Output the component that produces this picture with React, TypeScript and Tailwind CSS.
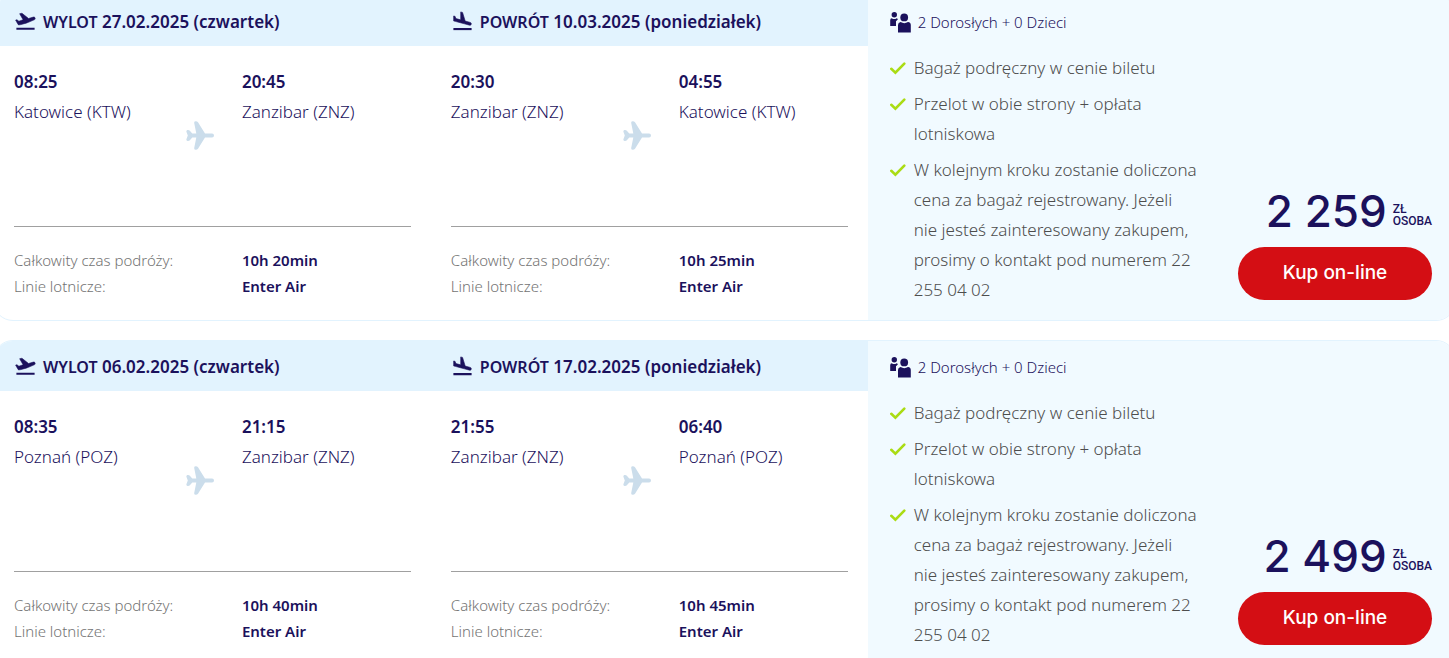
type Stop = { time: string; place: string };
type Flight = {
  kind: "out" | "back";
  label: string;
  date: string;
  from: Stop;
  to: Stop;
  duration: string;
  airline: string;
};
type Offer = { price: string; flights: Flight[] };

const offers: Offer[] = [
  {
    price: "2 259",
    flights: [
      {
        kind: "out",
        label: "WYLOT",
        date: "27.02.2025 (czwartek)",
        from: { time: "08:25", place: "Katowice (KTW)" },
        to: { time: "20:45", place: "Zanzibar (ZNZ)" },
        duration: "10h 20min",
        airline: "Enter Air",
      },
      {
        kind: "back",
        label: "POWRÓT",
        date: "10.03.2025 (poniedziałek)",
        from: { time: "20:30", place: "Zanzibar (ZNZ)" },
        to: { time: "04:55", place: "Katowice (KTW)" },
        duration: "10h 25min",
        airline: "Enter Air",
      },
    ],
  },
  {
    price: "2 499",
    flights: [
      {
        kind: "out",
        label: "WYLOT",
        date: "06.02.2025 (czwartek)",
        from: { time: "08:35", place: "Poznań (POZ)" },
        to: { time: "21:15", place: "Zanzibar (ZNZ)" },
        duration: "10h 40min",
        airline: "Enter Air",
      },
      {
        kind: "back",
        label: "POWRÓT",
        date: "17.02.2025 (poniedziałek)",
        from: { time: "21:55", place: "Zanzibar (ZNZ)" },
        to: { time: "06:40", place: "Poznań (POZ)" },
        duration: "10h 45min",
        airline: "Enter Air",
      },
    ],
  },
];

const benefits = [
  "Bagaż podręczny w cenie biletu",
  "Przelot w obie strony + opłata lotniskowa",
  "W kolejnym kroku zostanie doliczona cena za bagaż rejestrowany. Jeżeli nie jesteś zainteresowany zakupem, prosimy o kontakt pod numerem 22 255 04 02",
];

function TakeoffIcon() {
  return (
    <svg viewBox="0 0 24 24" className="size-[23px] shrink-0 fill-current" aria-hidden="true">
      <path d="M2.5 18.4h19v2.2h-19z" />
      <path
        d="M22.07 8.44c-.21-.8-1.04-1.28-1.84-1.06L15.2 8.9l-6.9-5.5-2.4.5 3.6 6.3-4.4 1.5-1.97-1.54-1.45.39 1.82 3.16 1.2 1.9 2.6-.4 5.4-1.5 4.1-1.6L21 10.29c.81-.23 1.28-1.05 1.07-1.85z"
        stroke="currentColor"
        strokeWidth="0.6"
        strokeLinejoin="round"
      />
    </svg>
  );
}

function LandingIcon() {
  return (
    <svg viewBox="0 0 24 24" className="size-[23px] shrink-0 fill-current" aria-hidden="true">
      <path d="M2.5 18.8h19v2.2h-19z" />
      <path
        d="M9.68 13.27l4.35 1.16 5.31 1.42c.8.21 1.62-.26 1.84-1.06.21-.8-.26-1.62-1.06-1.84l-5.31-1.42-2.76-9.02L10.12 2v8.28L5.15 8.95l-.93-2.32-1.45-.39v5.17l1.6.43 5.31 1.43z"
        stroke="currentColor"
        strokeWidth="0.6"
        strokeLinejoin="round"
      />
    </svg>
  );
}

function PlaneIcon() {
  return (
    <svg viewBox="0 0 28 29" className="mt-[-6px] mr-7 ml-auto h-[29px] w-7 fill-[#cbddeb]" aria-hidden="true">
      <path d="M26 12.4Q28 12.5 28 14.5Q28 16.5 26 16.6H19L12 27.7Q11 29 9.5 28.8Q7.8 28.5 8.2 27L10.3 16.6H6.3L3.6 19.5Q2.8 20.2 1.4 19.9Q0 19.5 0.4 18.2L1.8 14.5L0.4 10.8Q0 9.5 1.4 9.1Q2.8 8.8 3.6 9.5L6.3 12.4H10.3L8.2 2Q7.8 0.5 9.5 0.2Q11 0 12 1.3L19 12.4Z" />
    </svg>
  );
}

function PeopleIcon() {
  return (
    <svg viewBox="0 0 21 21" className="size-[21px] shrink-0 fill-current" aria-hidden="true">
      <circle cx="4.3" cy="2.8" r="2.7" />
      <path d="M0.2 14V8.2Q0.2 6.4 1.8 6.2Q4.3 8 6.6 6.2Q8 6.4 7.8 7.4L6 9.2V14Z" />
      <circle cx="14.2" cy="5.4" r="3.9" />
      <path d="M8 20.6V13Q8 10.6 10.6 10.1Q14.2 12.2 18 10.1Q20.8 10.6 20.8 13V20.6Z" />
    </svg>
  );
}

function CheckIcon() {
  return (
    <svg viewBox="0 0 16 14" className="mt-2 h-[14px] w-4 shrink-0" fill="none" aria-hidden="true">
      <path d="M1.3 7.8L5.4 11.6L14.3 2.6" stroke="#aadc14" strokeWidth="2.6" strokeLinecap="round" />
    </svg>
  );
}

function FlightColumn({ flight }: { flight: Flight }) {
  return (
    <section className="flex flex-1 flex-col">
      <h2 className="flex h-[50px] items-center gap-[6px] bg-[#e2f3fe] px-5 pt-px text-[17px] font-semibold">
        {flight.kind === "out" ? <TakeoffIcon /> : <LandingIcon />}
        <span>
          <span className="text-[16px]">{flight.label}</span> {flight.date}
        </span>
      </h2>
      <div className="mx-5 grid grid-cols-[228fr_169fr] border-b border-[#a0a0a0] pt-[21px] text-[17px] leading-[30px]">
        <div className="h-[159px]">
          <p className="font-semibold">{flight.from.time}</p>
          <p className="font-light">{flight.from.place}</p>
          <PlaneIcon />
        </div>
        <div>
          <p className="font-semibold">{flight.to.time}</p>
          <p className="font-light">{flight.to.place}</p>
        </div>
      </div>
      <dl className="mx-5 mt-5 mb-[21px] grid grid-cols-[228fr_169fr] text-[15px] leading-[26px]">
        <dt className="font-light text-[#737373]">Całkowity czas podróży:</dt>
        <dd className="font-semibold">{flight.duration}</dd>
        <dt className="font-light text-[#737373]">Linie lotnicze:</dt>
        <dd className="font-semibold">{flight.airline}</dd>
      </dl>
    </section>
  );
}

function OfferCard({ offer }: { offer: Offer }) {
  return (
    <article className="flex overflow-hidden rounded-[20px] border border-[#e2f3fe] bg-white">
      <div className="flex w-[59.8%] shrink-0">
        {offer.flights.map((flight) => (
          <FlightColumn key={flight.kind} flight={flight} />
        ))}
      </div>
      <div className="flex flex-1 flex-col bg-[#f1faff] pr-[23px] pl-[22px]">
        <p className="flex h-[52px] items-center gap-[7px] text-[15px] font-light">
          <PeopleIcon />
          2 Dorosłych + 0 Dzieci
        </p>
        <div className="flex flex-1 items-end justify-between">
          <ul className="flex w-[309px] flex-col gap-[6px] self-start pt-[5px] text-[17px] leading-[30px] font-light text-[#4d4d4d]">
            {benefits.map((benefit) => (
              <li key={benefit} className="flex gap-2">
                <CheckIcon />
                <span>{benefit}</span>
              </li>
            ))}
          </ul>
          <div className="mb-5 flex w-[194px] flex-col">
            <p className="flex items-end justify-end gap-[6px]">
              <span className="font-['Inter',sans-serif] text-[44px] leading-[52px] font-medium whitespace-nowrap">
                {offer.price}
              </span>
              <span className="mb-[10px] font-['Roboto',sans-serif] text-[12px] leading-3 font-medium">
                ZŁ
                <br />
                OSOBA
              </span>
            </p>
            <button
              type="button"
              className="mt-[10px] h-[53px] rounded-full bg-[#d40e14] font-['Inter',sans-serif] text-[19px] font-medium text-white"
            >
              Kup on-line
            </button>
          </div>
        </div>
      </div>
    </article>
  );
}

export default function App() {
  return (
    <main className="h-screen overflow-hidden bg-white font-['Noto_Sans','Open_Sans',sans-serif] text-[#1b115c]">
      <div className="-mx-[7px] -mt-[5px] flex flex-col gap-[19px]">
        {offers.map((offer) => (
          <OfferCard key={offer.price} offer={offer} />
        ))}
      </div>
    </main>
  );
}
